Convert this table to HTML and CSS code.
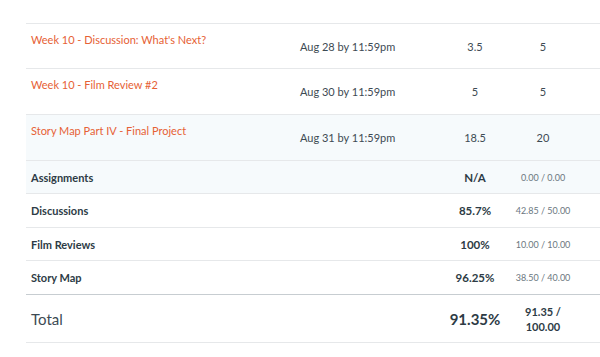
FILE: index.html
```html
<!DOCTYPE html>
<html>
<head>
<meta charset="utf-8">
<link rel="stylesheet" href="styles.css">
</head>
<body>
<div class="grades">
  <div class="row item first">
    <div class="c-title"><a class="link">Week 10 - Discussion: What's Next?</a></div>
    <div class="c-date">Aug 28 by 11:59pm</div>
    <div class="c-score">3.5</div>
    <div class="c-out">5</div>
  </div>
  <div class="row item">
    <div class="c-title"><a class="link">Week 10 - Film Review #2</a></div>
    <div class="c-date">Aug 30 by 11:59pm</div>
    <div class="c-score">5</div>
    <div class="c-out">5</div>
  </div>
  <div class="row item shaded">
    <div class="c-title"><a class="link">Story Map Part IV - Final Project</a></div>
    <div class="c-date">Aug 31 by 11:59pm</div>
    <div class="c-score">18.5</div>
    <div class="c-out">20</div>
  </div>
  <div class="row group short shaded">
    <div class="c-title">Assignments</div>
    <div class="c-date"></div>
    <div class="c-score">N/A</div>
    <div class="c-out">0.00 / 0.00</div>
  </div>
  <div class="row group">
    <div class="c-title">Discussions</div>
    <div class="c-date"></div>
    <div class="c-score">85.7%</div>
    <div class="c-out">42.85 / 50.00</div>
  </div>
  <div class="row group short">
    <div class="c-title">Film Reviews</div>
    <div class="c-date"></div>
    <div class="c-score">100%</div>
    <div class="c-out">10.00 / 10.00</div>
  </div>
  <div class="row group">
    <div class="c-title">Story Map</div>
    <div class="c-date"></div>
    <div class="c-score">96.25%</div>
    <div class="c-out">38.50 / 40.00</div>
  </div>
  <div class="row total">
    <div class="c-title">Total</div>
    <div class="c-date"></div>
    <div class="c-score">91.35%</div>
    <div class="c-out">91.35 /<br>100.00</div>
  </div>
</div>
</body>
</html>
```

FILE: styles.css
```css
html, body {
  margin: 0;
  padding: 0;
  background: #ffffff;
}
body {
  font-family: Lato, "Open Sans", sans-serif;
  color: #2d3b45;
}
.grades {
  margin: 23px 0 0 26px;
  border-top: 1px solid #e6e8ea;
}
.row {
  display: grid;
  grid-template-columns: 264px 150px 70px 66px 1fr;
  border-bottom: 1px solid #e6e8ea;
}
.shaded {
  background: #f6fafc;
}
.item {
  height: 45px;
}
.item.first {
  height: 44px;
}
.item .c-title {
  padding: 9px 0 0 5px;
  font-size: 11px;
  line-height: 14px;
}
.link {
  color: #e66135;
  text-decoration: none;
}
.item .c-date {
  align-self: center;
  padding-left: 10px;
  font-size: 11px;
  color: #3d4a53;
}
.item .c-score,
.item .c-out {
  align-self: center;
  text-align: center;
  font-size: 11px;
  color: #3d4a53;
}
.group {
  height: 33px;
  align-items: center;
}
.group.short {
  height: 32px;
}
.group .c-title {
  padding-left: 5px;
  font-size: 11px;
  font-weight: 700;
}
.group .c-score {
  text-align: center;
  font-size: 11.5px;
  font-weight: 700;
}
.group .c-out {
  text-align: center;
  font-size: 9px;
  color: #6b7780;
}
.total {
  height: 47px;
  align-items: center;
  border-top: 1px solid #c7cdd1;
  margin-top: -1px;
}
.total .c-title {
  padding-left: 5px;
  font-size: 15px;
  color: #3d4a53;
}
.total .c-score {
  text-align: center;
  font-size: 15px;
  font-weight: 700;
}
.total .c-out {
  text-align: center;
  font-size: 11px;
  font-weight: 700;
  line-height: 15px;
}
```
